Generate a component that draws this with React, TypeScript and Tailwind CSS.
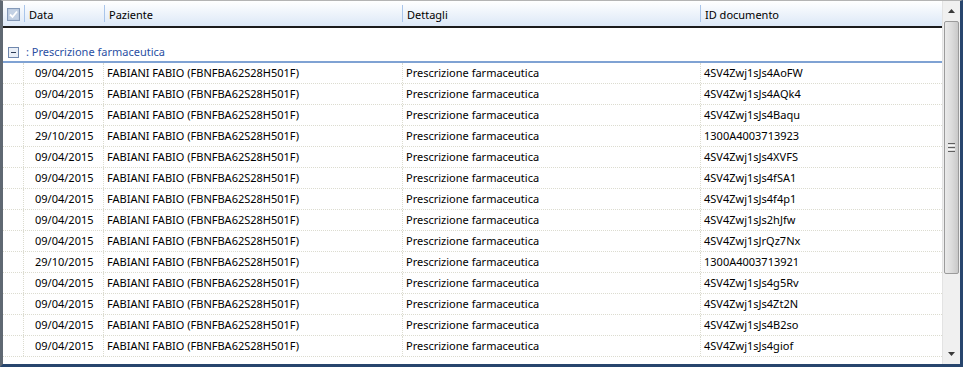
import React from 'react';

interface Doc {
  date: string;
  id: string;
}

const docs: Doc[] = [
  { date: '09/04/2015', id: '4SV4Zwj1sJs4AoFW' },
  { date: '09/04/2015', id: '4SV4Zwj1sJs4AQk4' },
  { date: '09/04/2015', id: '4SV4Zwj1sJs4Baqu' },
  { date: '29/10/2015', id: '1300A4003713923' },
  { date: '09/04/2015', id: '4SV4Zwj1sJs4XVFS' },
  { date: '09/04/2015', id: '4SV4Zwj1sJs4fSA1' },
  { date: '09/04/2015', id: '4SV4Zwj1sJs4f4p1' },
  { date: '09/04/2015', id: '4SV4Zwj1sJs2hJfw' },
  { date: '09/04/2015', id: '4SV4Zwj1sJrQz7Nx' },
  { date: '29/10/2015', id: '1300A4003713921' },
  { date: '09/04/2015', id: '4SV4Zwj1sJs4g5Rv' },
  { date: '09/04/2015', id: '4SV4Zwj1sJs4Zt2N' },
  { date: '09/04/2015', id: '4SV4Zwj1sJs4B2so' },
  { date: '09/04/2015', id: '4SV4Zwj1sJs4giof' },
];

const PATIENT = 'FABIANI FABIO (FBNFBA62S28H501F)';
const DETAIL = 'Prescrizione farmaceutica';

const HeaderCell = ({ label, width }: { label: string; width: string }) => (
  <div className={`${width} flex items-center h-full`}>
    <div className="w-px h-[17px] bg-[#a9c5ea]" />
    <span className="pl-[4px] pt-[3px]">{label}</span>
  </div>
);

const App = () => {
  return (
    <div
      className="w-[963px] h-[367px] bg-white flex border-t border-t-[#b4b4b4] border-l-[3px] border-l-[#5f6872] border-r-[3px] border-r-[#27456d] border-b-[3px] border-b-[#27456d] text-[11px] text-black overflow-hidden"
      style={{ fontFamily: '"Noto Sans", "DejaVu Sans", sans-serif' }}
    >
      <div className="flex-1 flex flex-col min-w-0">
        {/* column header */}
        <div className="h-[27px] flex items-center bg-gradient-to-b from-white to-[#dce8f7] border-b-2 border-b-[#1b1b1b] shrink-0">
          <div className="w-[21px] flex items-center justify-center h-full pt-[2px]">
            <svg width="13" height="13" viewBox="0 0 13 13">
              <rect x="0.5" y="0.5" width="12" height="12" fill="#b3c3da" stroke="#8499b8" />
              <rect x="1.5" y="1.5" width="10" height="10" fill="#c3d1e4" />
              <path d="M3 6.5 L5.5 9 L10 3.5" stroke="#ffffff" strokeWidth="1.8" fill="none" />
            </svg>
          </div>
          <HeaderCell label="Data" width="w-[80px]" />
          <HeaderCell label="Paziente" width="w-[298px]" />
          <HeaderCell label="Dettagli" width="w-[298px]" />
          <HeaderCell label="ID documento" width="flex-1" />
        </div>

        {/* group row */}
        <div className="h-[35px] flex items-end shrink-0">
          <div className="flex items-center h-[22px] pl-[5px] pt-[2px] text-[#2a4fa3] w-full border-b-2 border-b-[#7fa2d3]">
            <svg width="11" height="11" viewBox="0 0 11 11">
              <rect x="0.5" y="0.5" width="10" height="10" fill="#e9eef6" stroke="#6f87ad" />
              <path d="M3 5.5 H8" stroke="#2d3d57" strokeWidth="1" />
            </svg>
            <span className="pl-[7px]">: Prescrizione farmaceutica</span>
          </div>
        </div>

        {/* rows */}
        <div className="flex flex-col">
          {docs.map((d, i) => (
            <div key={i} className="h-[21px] flex items-center border-b border-dotted border-b-[#dcdcd0] pl-[2px]">
              <div className="w-[19px] h-full border-r border-dotted border-r-[#dcdcd0]" />
              <div className="w-[80px] pl-[11px] h-full flex items-center border-r border-dotted border-r-[#dcdcd0]">{d.date}</div>
              <div className="w-[298px] pl-[3px] h-full flex items-center">{PATIENT}</div>
              <div className="w-[298px] pl-[3px] h-full flex items-center border-l border-dotted border-l-[#dcdcd0]">{DETAIL}</div>
              <div className="flex-1 pl-[3px] h-full flex items-center border-l border-dotted border-l-[#dcdcd0]">{d.id}</div>
            </div>
          ))}
        </div>
      </div>

      {/* vertical scrollbar */}
      <div className="w-[18px] flex flex-col bg-[#f0f0f0] border-l border-l-[#e3e3e3] shrink-0">
        <div className="h-[20px] flex items-center justify-center shrink-0">
          <svg width="7" height="4" viewBox="0 0 7 4">
            <path d="M3.5 0 L7 4 H0 Z" fill="#3a3a3a" />
          </svg>
        </div>
        <div className="mx-[1px] h-[253px] rounded-[2px] border border-[#9b9b9b] bg-gradient-to-r from-[#eaeaea] via-[#dcdcdc] to-[#c9c9c9] flex items-center justify-center shrink-0">
          <div className="flex flex-col gap-[1px]">
            <div className="w-[7px] h-[1px] bg-[#606060]" />
            <div className="w-[7px] h-[1px] bg-[#f8f8f8]" />
            <div className="w-[7px] h-[1px] bg-[#606060]" />
            <div className="w-[7px] h-[1px] bg-[#f8f8f8]" />
            <div className="w-[7px] h-[1px] bg-[#606060]" />
          </div>
        </div>
        <div className="flex-1" />
        <div className="h-[20px] flex items-center justify-center shrink-0">
          <svg width="7" height="4" viewBox="0 0 7 4">
            <path d="M0 0 H7 L3.5 4 Z" fill="#3a3a3a" />
          </svg>
        </div>
      </div>
    </div>
  );
};

export default App;
